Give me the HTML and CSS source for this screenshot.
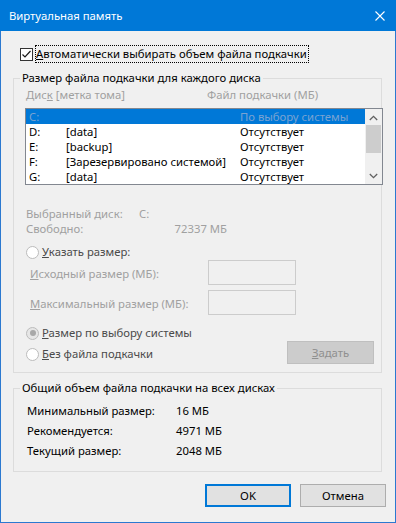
FILE: index.html
```html
<!DOCTYPE html>
<html>
<head>
    <meta charset="UTF-8">
    <title>Виртуальная память</title>
    <link rel="stylesheet" href="styles.css">
</head>
<body>
    <div class="window">
        <div class="titlebar">
            <span class="title">Виртуальная память</span>
            <svg class="close" width="10" height="10" viewBox="0 0 10 10"><path d="M0.5 0.5L9.5 9.5M9.5 0.5L0.5 9.5" stroke="#ffffff" stroke-width="1.1" fill="none"/></svg>
        </div>
        <div class="content">
            <div class="auto">
                <span class="checkbox"><svg width="11" height="11" viewBox="0 0 11 11"><path d="M1.5 5.5L4 8L9.5 2" stroke="#1a1a1a" stroke-width="1.2" fill="none"/></svg></span>
                <span class="focus"><u>А</u>втоматически выбирать объем файла подкачки</span>
            </div>

            <fieldset class="group drives">
                <legend>Размер файла подкачки для каждого диска</legend>
                <div class="head">
                    <span class="c-disk">Дис<u>к</u> [метка тома]</span>
                    <span>Файл подкачки (МБ)</span>
                </div>
                <div class="listbox">
                    <ul class="rows">
                        <li class="selected"><span class="c-letter">C:</span><span class="c-label"></span><span>По выбору системы</span></li>
                        <li><span class="c-letter">D:</span><span class="c-label">[data]</span><span>Отсутствует</span></li>
                        <li><span class="c-letter">E:</span><span class="c-label">[backup]</span><span>Отсутствует</span></li>
                        <li><span class="c-letter">F:</span><span class="c-label">[Зарезервировано системой]</span><span>Отсутствует</span></li>
                        <li><span class="c-letter">G:</span><span class="c-label">[data]</span><span>Отсутствует</span></li>
                    </ul>
                    <div class="scrollbar">
                        <span class="arrow"><svg width="9" height="6" viewBox="0 0 9 6"><path d="M0.8 5L4.5 1.3L8.2 5" stroke="#606060" stroke-width="1.3" fill="none"/></svg></span>
                        <span class="track"><span class="thumb"></span></span>
                        <span class="arrow"><svg width="9" height="6" viewBox="0 0 9 6"><path d="M0.8 1L4.5 4.7L8.2 1" stroke="#606060" stroke-width="1.3" fill="none"/></svg></span>
                    </div>
                </div>

                <div class="info">
                    <span>Выбранный диск:</span><span>C:</span>
                    <span>Свободно:</span><span class="free">72337 МБ</span>
                </div>

                <div class="radio-row custom"><span class="radio"></span><span><u>У</u>казать размер:</span></div>
                <div class="size-row"><span class="size-label"><u>И</u>сходный размер (МБ):</span><span class="input"></span></div>
                <div class="size-row"><span class="size-label"><u>М</u>аксимальный размер (МБ):</span><span class="input"></span></div>

                <div class="bottom-row">
                    <div class="radios">
                        <div class="radio-row"><span class="radio checked"></span><span><u>Р</u>азмер по выбору системы</span></div>
                        <div class="radio-row"><span class="radio"></span><span><u>Б</u>ез файла подкачки</span></div>
                    </div>
                    <button class="btn set" disabled><u>З</u>адать</button>
                </div>
            </fieldset>

            <fieldset class="group totals">
                <legend>Общий объем файла подкачки на всех дисках</legend>
                <div class="totals-grid">
                    <span>Минимальный размер:</span><span>16 МБ</span>
                    <span>Рекомендуется:</span><span>4971 МБ</span>
                    <span>Текущий размер:</span><span>2048 МБ</span>
                </div>
            </fieldset>

            <div class="buttons">
                <button class="btn default">OK</button>
                <button class="btn">Отмена</button>
            </div>
        </div>
    </div>
</body>
</html>
```

FILE: styles.css
```css
body, div, ul, li, fieldset, legend {
    margin: 0;
    padding: 0;
}
ul {
    list-style: none;
}
body {
    font-family: "Noto Sans", "Liberation Sans", sans-serif;
    font-size: 11.3px;
    color: #000000;
    background-color: #f0f0f0;
}
.window {
    width: 396px;
    height: 523px;
    display: flex;
    flex-direction: column;
    background-color: #f0f0f0;
}
.titlebar {
    height: 31px;
    flex: none;
    display: flex;
    align-items: center;
    background-color: #0078d7;
    color: #ffffff;
}
.title {
    padding-left: 9px;
    line-height: 16px;
}
.close {
    margin-left: auto;
    margin-right: 11px;
    margin-top: 1px;
}
.content {
    flex: 1;
    border: 1px solid #2b79d0;
    border-top: none;
    display: flex;
    flex-direction: column;
}

/* checkbox */
.auto {
    display: flex;
    align-items: center;
    margin-top: 14px;
    padding-left: 19px;
    height: 18px;
}
.checkbox {
    width: 13px;
    height: 13px;
    box-sizing: border-box;
    border: 1px solid #333333;
    background-color: #ffffff;
    display: flex;
}
.focus {
    margin-left: 2px;
    border: 1px dotted #000000;
    padding: 0 1px 0 0;
    line-height: 16px;
}

/* group boxes */
.group {
    margin: 0 0 0 12px;
    width: 369px;
    box-sizing: border-box;
    border: 1px solid #dcdcdc;
    min-width: 0;
}
.group legend {
    margin-left: 6px;
    padding: 0 2px;
    line-height: 16px;
}
.drives {
    margin-top: 7px;
    padding-bottom: 8px;
}
.head {
    display: flex;
    padding: 1px 0 0 12px;
    line-height: 16px;
    color: #a0a0a0;
}
.c-disk {
    width: 181px;
}

/* listbox */
.listbox {
    margin: 5px 0 0 11px;
    width: 358px;
    height: 77px;
    box-sizing: border-box;
    border: 1px solid #828790;
    background-color: #ffffff;
    display: flex;
}
.rows {
    flex: 1;
}
.rows li {
    display: flex;
    height: 15px;
    line-height: 15px;
    padding-left: 3px;
    white-space: nowrap;
}
.rows li.selected {
    background-color: #0078d7;
    color: #7aa3d2;
}
.c-letter {
    width: 37px;
}
.c-label {
    width: 174px;
}
.scrollbar {
    width: 17px;
    flex: none;
    display: flex;
    flex-direction: column;
    background-color: #f0f0f0;
}
.arrow {
    height: 17px;
    display: flex;
    align-items: center;
    justify-content: center;
}
.track {
    flex: 1;
}
.thumb {
    display: block;
    margin: -1px 1px 0;
    height: 28px;
    background-color: #cdcdcd;
}

/* selected drive info */
.info {
    display: grid;
    grid-template-columns: 113px 88px;
    margin-top: 21px;
    padding-left: 12px;
    line-height: 15px;
    color: #a0a0a0;
}
.info .free {
    text-align: right;
}

/* radios and sizes */
.radio-row {
    display: flex;
    align-items: center;
    height: 16px;
    line-height: 16px;
    padding-left: 12px;
    color: #4a4a4a;
}
.custom {
    margin-top: 8px;
}
.radio {
    width: 13px;
    height: 13px;
    box-sizing: border-box;
    border: 1px solid #bcbcbc;
    border-radius: 50%;
    background-color: #ffffff;
    margin-right: 3px;
    display: flex;
    align-items: center;
    justify-content: center;
}
.radio.checked {
    background-color: #e6e6e6;
}
.radio.checked::after {
    content: "";
    width: 6px;
    height: 6px;
    border-radius: 50%;
    background-color: #a8a8a8;
}
.size-row {
    display: flex;
    align-items: center;
    height: 25px;
    margin-bottom: 5px;
    padding-left: 16px;
    color: #a0a0a0;
}
.size-label {
    width: 178px;
    padding-top: 1px;
}
.input {
    width: 88px;
    height: 25px;
    box-sizing: border-box;
    border: 1px solid #cccccc;
}
.bottom-row {
    display: flex;
    align-items: flex-end;
    margin-top: 10px;
}
.radios {
    display: flex;
    flex-direction: column;
    gap: 5px;
    padding-bottom: 2px;
}

/* buttons */
.btn {
    font: inherit;
    width: 86px;
    height: 23px;
    padding: 0;
    box-sizing: border-box;
    border: 1px solid #adadad;
    background-color: #e1e1e1;
    color: #000000;
}
.btn.set {
    margin-left: auto;
    margin-right: 7px;
    width: 87px;
    border-color: #bfbfbf;
    background-color: #cccccc;
    color: #8f8f8f;
}
.btn.default {
    border: 2px solid #0078d7;
}

/* totals */
.totals {
    margin-top: 7px;
    padding: 5px 0 10px 0;
}
.totals-grid {
    display: grid;
    grid-template-columns: 149px auto;
    padding-left: 13px;
    line-height: 20px;
}
.buttons {
    display: flex;
    justify-content: flex-end;
    gap: 9px;
    margin-top: 12px;
    padding-right: 9px;
}
```
